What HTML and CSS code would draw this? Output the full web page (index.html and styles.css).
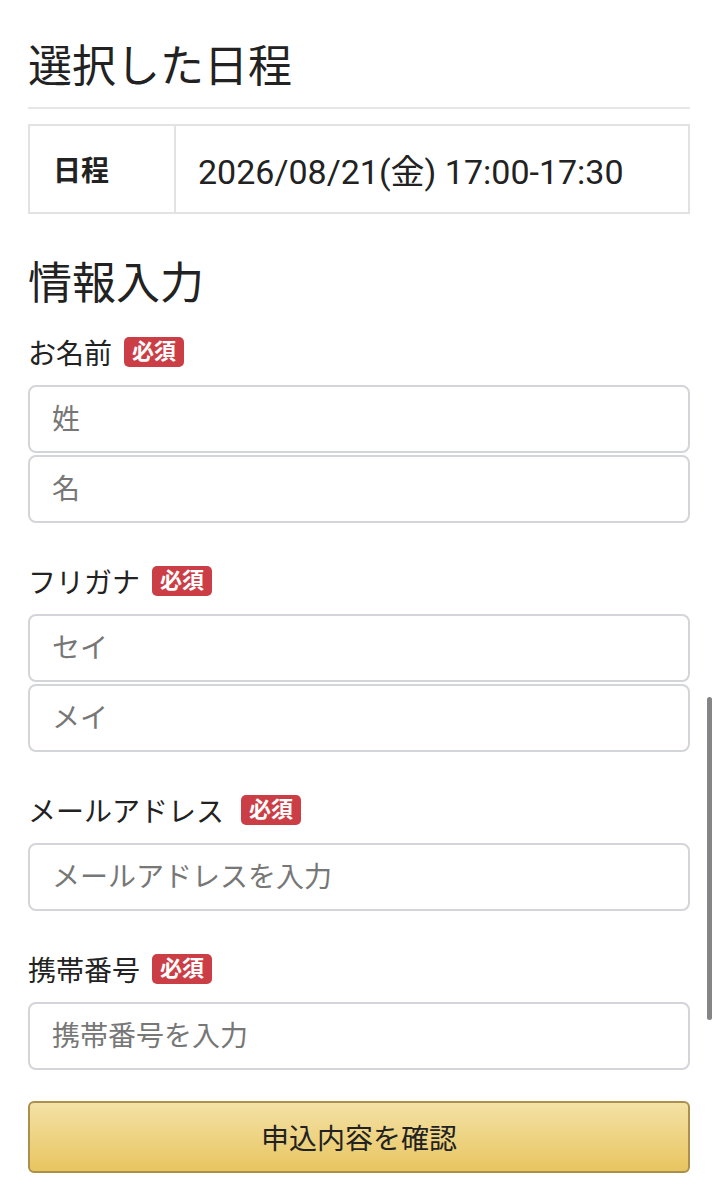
FILE: index.html
```html
<!DOCTYPE html>
<html lang="ja">
<head>
    <meta charset="UTF-8">
    <meta name="viewport" content="width=device-width, initial-scale=1.0">
    <title>日程申込</title>
    <link rel="stylesheet" href="styles.css">
</head>
<body>
    <div class="container">
        <h2 class="section-title bordered">選択した日程</h2>
        <table class="schedule">
            <tr>
                <th>日程</th>
                <td>2026/08/21(金) 17:00-17:30</td>
            </tr>
        </table>

        <h2 class="section-title">情報入力</h2>
        <form class="entry-form">
            <div class="field">
                <div class="field-label">お名前<span class="required">必須</span></div>
                <input type="text" placeholder="姓">
                <input type="text" placeholder="名">
            </div>
            <div class="field">
                <div class="field-label">フリガナ<span class="required">必須</span></div>
                <input type="text" placeholder="セイ">
                <input type="text" placeholder="メイ">
            </div>
            <div class="field">
                <div class="field-label">メールアドレス<span class="required wide">必須</span></div>
                <input type="email" placeholder="メールアドレスを入力">
            </div>
            <div class="field">
                <div class="field-label">携帯番号<span class="required">必須</span></div>
                <input type="tel" placeholder="携帯番号を入力">
            </div>
            <button type="button" class="submit">申込内容を確認</button>
        </form>
    </div>
    <div class="scroll-thumb"></div>
</body>
</html>
```

FILE: styles.css
```css
body {
    margin: 0;
    background: #fff;
    color: #222;
    font-family: Roboto, "Noto Sans CJK JP", sans-serif;
}
.container {
    padding: 37px 28px 0;
}
.section-title {
    font-size: 44px;
    font-weight: 400;
    line-height: 60px;
    margin: 0;
    color: #222;
}
.section-title.bordered {
    padding-bottom: 10px;
    border-bottom: 2px solid #e6e6e6;
    margin-bottom: 15px;
}
.schedule {
    width: 100%;
    border-collapse: collapse;
    margin-bottom: 40px;
}
.schedule th,
.schedule td {
    border: 2px solid #e2e2e2;
    height: 86px;
    padding: 0 22px;
    text-align: left;
}
.schedule th {
    width: 100px;
    font-size: 28px;
    font-weight: 700;
    padding: 0 21px 0 23px;
}
.schedule td {
    font-size: 34px;
}
.entry-form {
    margin-top: 21px;
}
.field {
    margin-bottom: 41px;
}
.field-label {
    display: flex;
    align-items: center;
    height: 34px;
    font-size: 28px;
    margin-bottom: 16px;
}
.required {
    display: inline-block;
    margin-left: 12px;
    padding: 0 8px;
    height: 30px;
    line-height: 30px;
    border-radius: 5px;
    background: #cc3e46;
    color: #fff;
    font-size: 22px;
    font-weight: 700;
}
.required.wide {
    margin-left: 17px;
}
input {
    display: block;
    box-sizing: border-box;
    width: 100%;
    height: 68px;
    padding: 0 22px;
    border: 2px solid #d3d5d8;
    border-radius: 8px;
    font-family: inherit;
    font-size: 28px;
    color: #222;
}
input + input {
    margin-top: 2px;
}
input::placeholder {
    color: #777;
}
.field:last-of-type {
    margin-bottom: 31px;
}
.submit {
    display: block;
    width: 100%;
    height: 72px;
    border: 2px solid #ab8f4c;
    border-radius: 6px;
    background: linear-gradient(#f3e1a6, #e8c55f);
    font-family: inherit;
    font-size: 28px;
    color: #222;
    cursor: pointer;
}
/* overlay scrollbar thumb */
.scroll-thumb {
    position: fixed;
    right: 6px;
    top: 697px;
    width: 5px;
    height: 323px;
    border-radius: 3px;
    background: #858585;
}
```
